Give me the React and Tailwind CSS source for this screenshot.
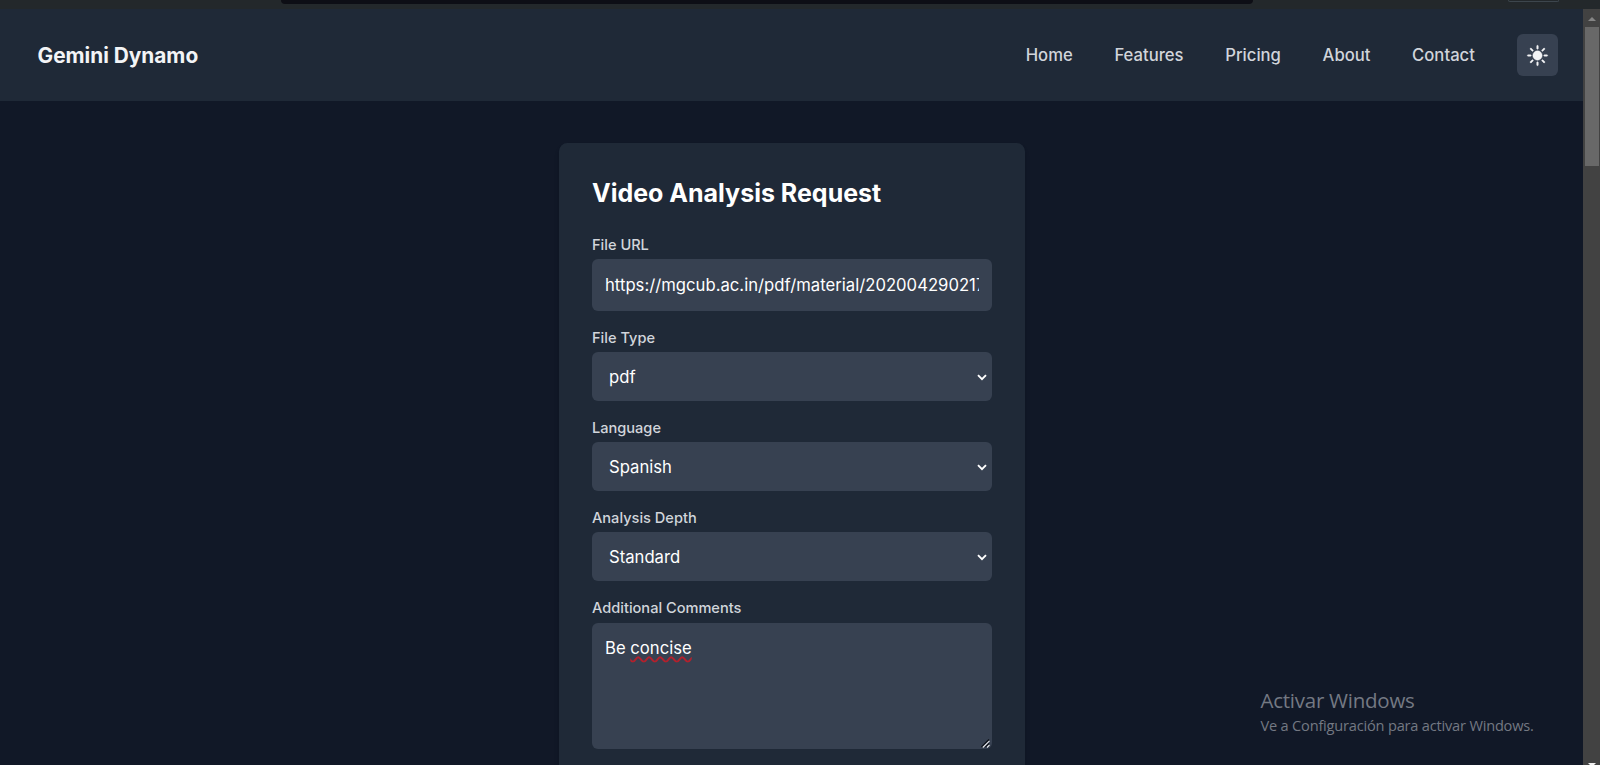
import { HiSun } from "react-icons/hi2";

const NAV = ["Home", "Features", "Pricing", "About", "Contact"];

function BrowserEdge() {
  return (
    <div className="flex h-[9px] shrink-0 items-start bg-[#23282b]">
      <div className="ml-[281px] h-1 w-[972px] rounded-b-[5px] bg-[#0d0e15]" />
      <div className="ml-[255px] h-[2px] w-[51px] rounded-b-[5px] border border-t-0 border-[#3d464d]" />
    </div>
  );
}

function Header() {
  return (
    <header className="flex h-[92px] shrink-0 items-center justify-between bg-[#1f2937] pr-[24.8px] pl-[37.5px]">
      <h1 className="pt-px text-[20.83px] font-bold text-[#f3f4f6]">Gemini Dynamo</h1>
      <nav className="flex items-center gap-[41.67px] text-[16.67px] font-medium text-[#d1d5db]">
        {NAV.map((item) => (
          <a key={item} href="#">{item}</a>
        ))}
        <button className="rounded-[6px] bg-[#374151] p-[8.33px] text-[#f3f4f6]" aria-label="Toggle theme">
          <HiSun className="size-[25px] stroke-current stroke-[0.4]" />
        </button>
      </nav>
    </header>
  );
}

function Field({ label, children }) {
  return (
    <div className="flex flex-col gap-[3px]">
      <span className="h-[22px] pt-[0.8px] text-[14.58px] leading-[21px] font-medium text-[#d1d5db]">{label}</span>
      {children}
    </div>
  );
}

function Select({ value }) {
  return (
    <div className="flex h-[48.4px] items-center justify-between rounded-[6px] bg-[#374151] pt-[1.2px] pr-[5px] pl-[17px]">
      <span>{value}</span>
      <svg className="h-[7px] w-[10px]" viewBox="0 0 10 7" fill="none" stroke="currentColor" strokeWidth="1.9">
        <path d="M1 1.2 5 5.2 9 1.2" />
      </svg>
    </div>
  );
}

function RequestCard() {
  return (
    <section className="ml-px h-[700px] w-[466.67px] shrink-0 rounded-[8.33px] bg-[#1f2937] p-[33.33px] text-[16.67px] leading-[25px] text-white shadow-md">
      <h2 className="mb-[23.8px] pt-px text-[25px] leading-[33.33px] font-bold">Video Analysis Request</h2>
      <div className="flex flex-col gap-[16.67px]">
        <Field label="File URL">
          <div className="flex h-[51.6px] items-center rounded-[6px] bg-[#374151] px-[13px] pt-[1.2px]">
            <span className="w-full overflow-hidden tracking-[0.012px] whitespace-nowrap">https://mgcub.ac.in/pdf/material/202004290217</span>
          </div>
        </Field>
        <Field label="File Type"><Select value="pdf" /></Field>
        <Field label="Language"><Select value="Spanish" /></Field>
        <Field label="Analysis Depth"><Select value="Standard" /></Field>
        <Field label="Additional Comments">
          <div className="flex h-[126.5px] flex-col justify-between rounded-[6px] bg-[#374151] pt-[13px] pr-[2px] pb-[1px] pl-[13px]">
            <p>
              Be{" "}
              <span className="underline decoration-[#b3202c] decoration-wavy decoration-[1.5px] underline-offset-[1.5px] [text-decoration-skip-ink:none]">concise</span>
            </p>
            <svg className="size-[9px] self-end" viewBox="0 0 9 9" fill="none">
              <path d="M0.5 8 8 0.5M4.5 8 8 4.5" stroke="#0b0f16" strokeWidth="1.3" />
              <path d="M1.8 8.5 8.5 1.8M6 8.5 8.5 6" stroke="#e5e7eb" strokeWidth="1.1" />
            </svg>
          </div>
        </Field>
      </div>
    </section>
  );
}

function Scrollbar() {
  return (
    <div className="flex w-[17px] shrink-0 flex-col items-center bg-[#424242]">
      <div className="flex h-[18px] items-center pt-[2px]">
        <svg className="h-1 w-2" viewBox="0 0 8 4"><path d="M0 4 4 0 8 4Z" fill="#858585" /></svg>
      </div>
      <div className="h-[139px] w-[14px] bg-[#686868]" />
      <svg className="mt-auto h-[2px] w-2" viewBox="0 0 8 2"><path d="M0 0H8L6 2H2Z" fill="#f1f1f1" /></svg>
    </div>
  );
}

export default function App() {
  return (
    <div className="relative flex h-[765px] w-[1600px] flex-col overflow-hidden bg-[#111827] font-['Inter',sans-serif]">
      <BrowserEdge />
      <div className="flex min-h-0 flex-1">
        <div className="flex min-w-0 flex-1 flex-col overflow-hidden">
          <Header />
          <main className="flex flex-1 items-start justify-center pt-[41.67px]">
            <RequestCard />
          </main>
        </div>
        <Scrollbar />
      </div>
      <aside className="absolute top-[686px] left-[1260.5px] font-['Open_Sans',sans-serif] text-[#747983]">
        <p className="text-[20.5px] leading-[29px] tracking-[-0.25px]">Activar Windows</p>
        <p className="text-[14.6px] leading-[21px] tracking-[-0.2px]">Ve a Configuración para activar Windows.</p>
      </aside>
    </div>
  );
}
